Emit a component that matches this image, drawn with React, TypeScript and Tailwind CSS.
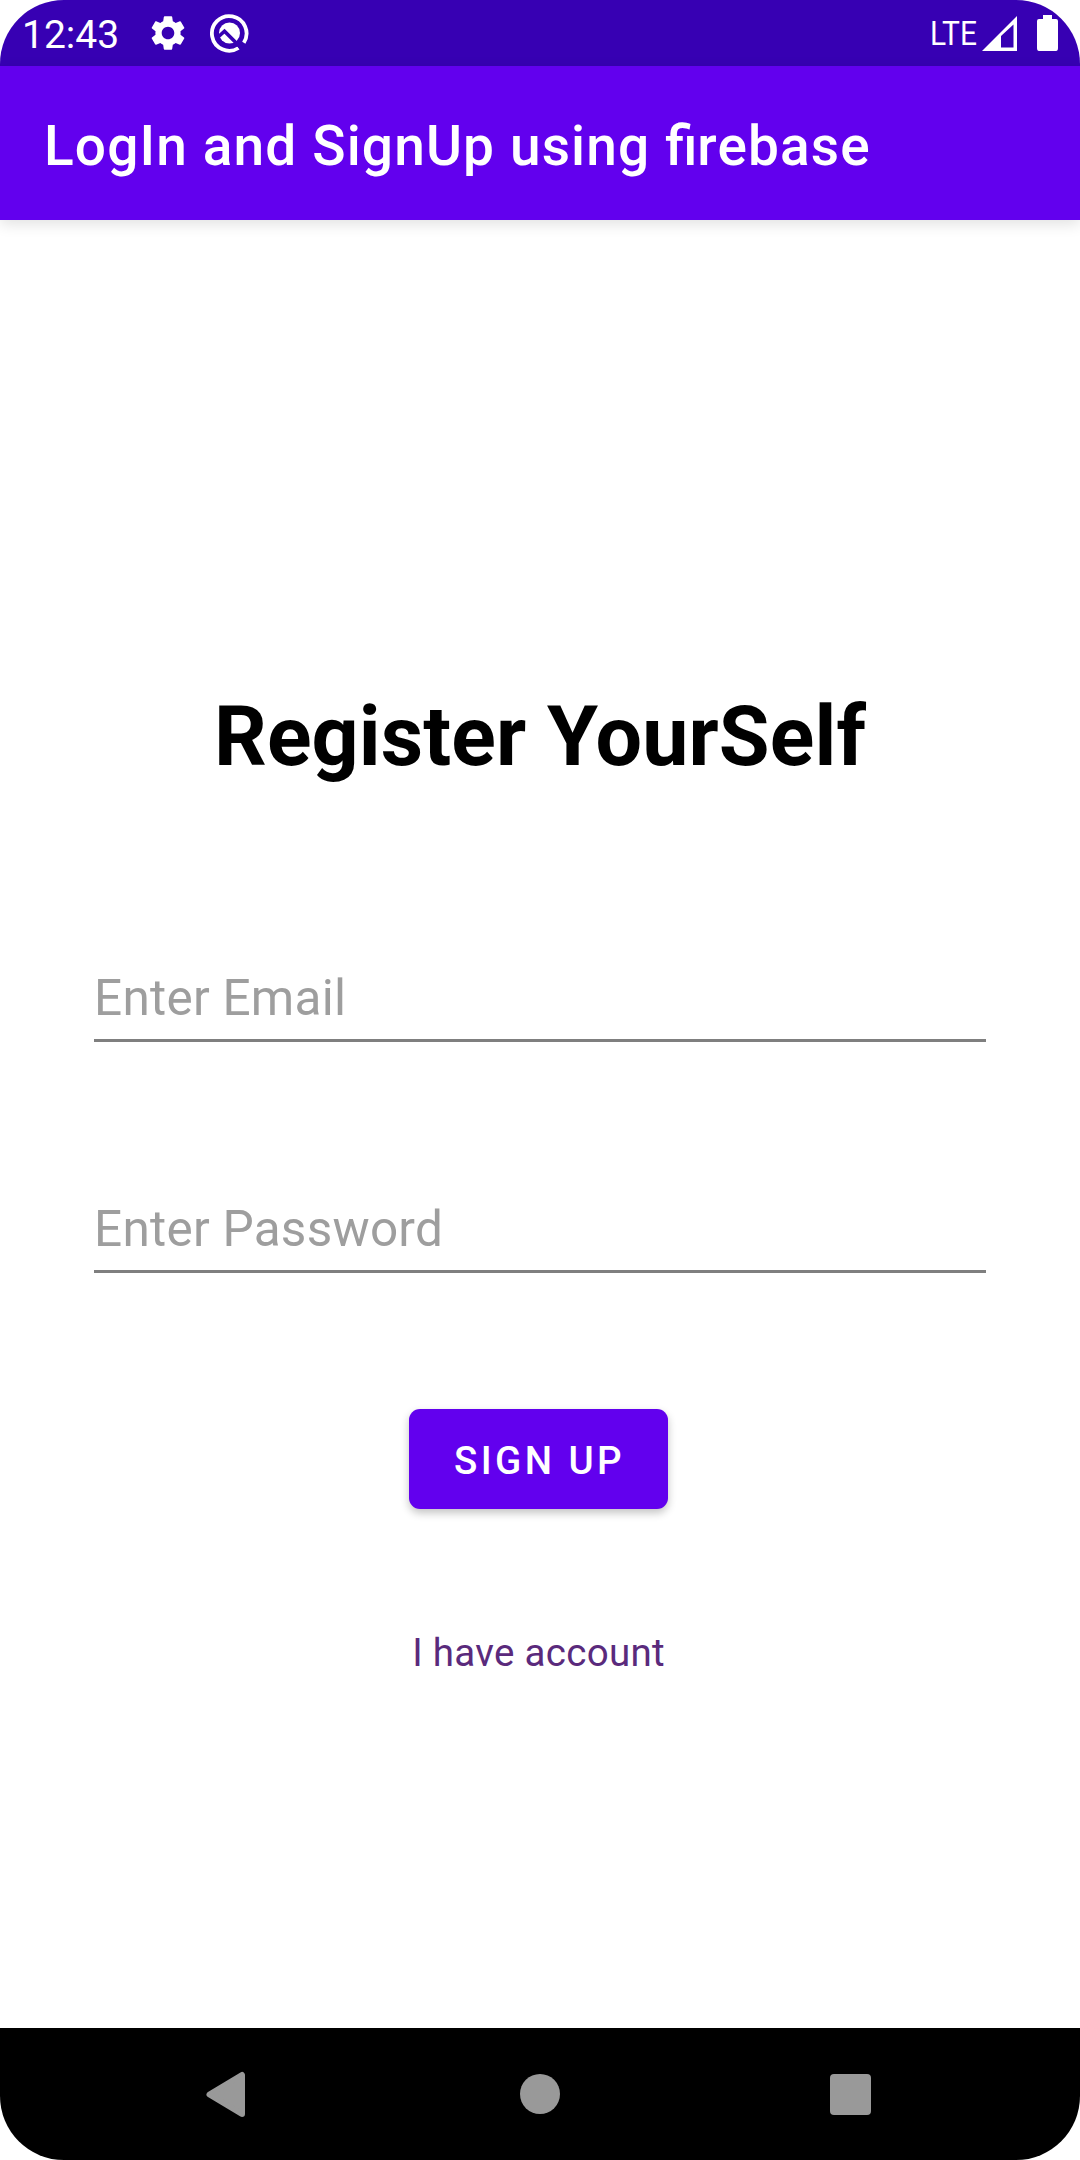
import { MdSettings } from "react-icons/md";

function StatusBar() {
  return (
    <header className="flex h-[66px] shrink-0 items-center bg-[#3700b3] pl-[22px] pr-[22px] text-white">
      <span className="w-[98px] pt-[3px] text-[39px] leading-[66px]">12:43</span>
      <MdSettings className="ml-[27px] size-[42px]" />
      <svg className="ml-[20px]" width="40" height="40" viewBox="0 0 40 40" fill="none">
        <path d="M29.5 35 A17.3 17.3 0 1 1 34.8 29.7" stroke="#fff" strokeWidth="3.8" />
        <circle cx="20.5" cy="20" r="10.5" fill="#fff" />
        <path d="M8 25 L15.5 18.2 L33 35.7" stroke="#3700b3" strokeWidth="3.6" />
      </svg>
      <div className="ml-auto flex items-center">
        <span className="w-[49px] origin-left scale-x-[0.88] text-[34px] leading-[60px]">LTE</span>
        <svg className="ml-[3px]" width="35" height="35" viewBox="0 0 35 35">
          <path fillRule="evenodd" d="M0 35 L35 0 V35 Z M19 20 L31.5 8.5 V31.5 H19 Z" fill="#fff" />
        </svg>
        <svg className="ml-[20px]" width="21" height="36" viewBox="0 0 21 36">
          <path d="M6 0 H15 V4 H19 Q21 4 21 6 V33 Q21 36 19 36 H2 Q0 36 0 33 V6 Q0 4 2 4 H6 Z" fill="#fff" />
        </svg>
      </div>
    </header>
  );
}

function Field({ label, type }: { label: string; type: string }) {
  return (
    <input
      type={type}
      placeholder={label}
      className="h-[72px] w-[892px] border-b-[3px] border-[#7f7f7f] bg-transparent pb-[14px] text-[49.5px] leading-[55px] tracking-[0.25px] outline-none placeholder:text-[#9e9e9e] placeholder:opacity-100"
    />
  );
}

export default function App() {
  return (
    <div className="h-[2160px] w-[1080px] bg-white">
      <div className="flex h-full flex-col overflow-hidden rounded-[64px] bg-white font-['Roboto',sans-serif]">
        <StatusBar />
        <div className="z-10 flex h-[154px] shrink-0 items-center bg-[#6200ee] pl-[44px] pt-[5px] shadow-[0_4px_14px_rgba(0,0,0,0.12)]">
          <h1 className="text-[55px] font-medium leading-[64px] tracking-[1.14px] text-white">
            LogIn and SignUp using <span className="tracking-normal">fi</span>rebase
          </h1>
        </div>
        <main className="flex grow flex-col items-center">
          <h2 className="mt-[468px] text-[82.5px] font-bold leading-[97px] tracking-[0.12px] text-black">Register YourSelf</h2>
          <div className="mt-[185px] flex flex-col gap-[159px]">
            <Field label="Enter Email" type="text" />
            <Field label="Enter Password" type="password" />
          </div>
          <button className="mr-[3px] mt-[136px] h-[100px] w-[259px] rounded-[11px] bg-[#6200ee] pl-[2px] pt-[3px] text-[38.5px] font-medium tracking-[3.44px] text-white shadow-[0_4px_8px_rgba(0,0,0,0.24)]">
            SIGN UP
          </button>
          <a className="mr-[3px] mt-[121px] text-[38.5px] leading-[45px] tracking-[0.3px] text-[#5a2a7c]">I have account</a>
        </main>
        <nav className="flex h-[132px] shrink-0 items-center bg-black text-[#999]">
          <svg className="ml-[206px]" width="39" height="46" viewBox="0 0 39 46">
            <path d="M3.5 23.5 L36 4 V43 Z" fill="currentColor" stroke="currentColor" strokeWidth="6" strokeLinejoin="round" />
          </svg>
          <div className="ml-[275px] size-[40px] rounded-full bg-[#999]" />
          <div className="ml-[270px] size-[41px] rounded-[4px] bg-[#999]" />
        </nav>
      </div>
    </div>
  );
}
